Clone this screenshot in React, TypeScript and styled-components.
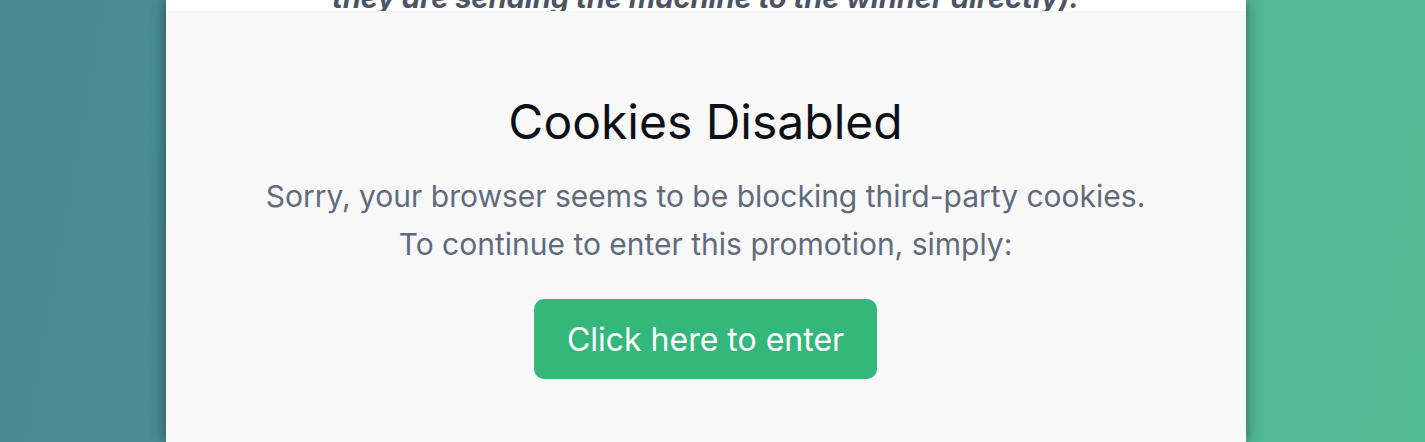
import React from "react";
import styled, { createGlobalStyle } from "styled-components";

const GlobalStyle = createGlobalStyle`
  html, body {
    margin: 0;
    padding: 0;
    height: 100%;
    overflow: hidden;
  }
  body {
    font-family: Inter, "Noto Sans", sans-serif;
    background: linear-gradient(100deg, #488992 0%, #4c9294 40%, #52b896 80%, #53ba96 100%);
  }
  #root {
    height: 100%;
  }
`;

const Page = styled.div`
  display: flex;
  justify-content: center;
  height: 442px;
  padding-right: 14px;
`;

const Card = styled.div`
  width: 1080px;
  display: flex;
  flex-direction: column;
  background: #f8f8f8;
  box-shadow: 0 0 14px rgba(0, 0, 0, 0.45);
`;

const Leftover = styled.div`
  height: 11px;
  overflow: hidden;
  background: #ffffff;
  display: flex;
  align-items: flex-end;
  justify-content: center;
`;

const LeftoverText = styled.p`
  margin: 0;
  font-size: 29px;
  line-height: 26px;
  font-weight: 700;
  font-style: italic;
  color: #4b5563;
  white-space: nowrap;
`;

const Notice = styled.div`
  flex: 1;
  display: flex;
  flex-direction: column;
  align-items: center;
  padding-top: 82px;
`;

const Title = styled.h1`
  margin: 0;
  font-size: 48px;
  line-height: 58px;
  font-weight: 400;
  color: #0d1117;
`;

const Message = styled.p`
  margin: 21px 0 0;
  font-size: 30px;
  line-height: 48px;
  color: #5f6b7d;
  text-align: center;
`;

const EnterButton = styled.button`
  margin-top: 31px;
  height: 80px;
  padding: 0 33px;
  border: none;
  border-radius: 10px;
  background: #34b77b;
  color: #ffffff;
  font-family: inherit;
  font-size: 32px;
  cursor: pointer;
`;

export default function App() {
  return (
    <>
      <GlobalStyle />
      <Page>
        <Card>
          <Leftover>
            <LeftoverText>they are sending the machine to the winner directly).</LeftoverText>
          </Leftover>
          <Notice>
            <Title>Cookies Disabled</Title>
            <Message>
              Sorry, your browser seems to be blocking third-party cookies.
              <br />
              To continue to enter this promotion, simply:
            </Message>
            <EnterButton>Click here to enter</EnterButton>
          </Notice>
        </Card>
      </Page>
    </>
  );
}
